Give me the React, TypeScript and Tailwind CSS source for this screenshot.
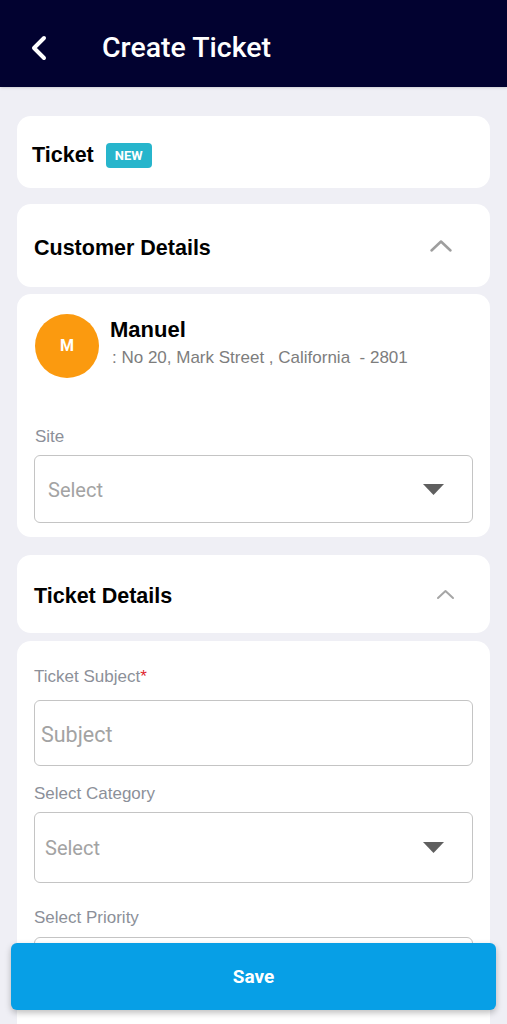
import React from "react";

const ChevronUp = ({ w, h, stroke, color }: { w: number; h: number; stroke: number; color: string }) => (
  <svg width={w} height={h} viewBox={`0 0 ${w} ${h}`} fill="none">
    <polyline
      points={`${stroke},${h - stroke} ${w / 2},${stroke} ${w - stroke},${h - stroke}`}
      stroke={color}
      strokeWidth={stroke}
      strokeLinecap="round"
      strokeLinejoin="round"
    />
  </svg>
);

const Caret = () => (
  <svg width="21" height="11" viewBox="0 0 21 11">
    <polygon points="0,0 21,0 10.5,11" fill="#5f5f5f" />
  </svg>
);

const SelectBox = ({ h, pl }: { h: string; pl: string }) => (
  <div className={`flex ${h} items-center justify-between rounded-[6px] border border-[#c4c4c4] ${pl} pr-[28px]`}>
    <span className="pt-[1px] font-['Roboto',sans-serif] text-[20px] text-[#a3a3a3]">Select</span>
    <Caret />
  </div>
);

const Label = ({ children, className = "" }: { children: React.ReactNode; className?: string }) => (
  <p className={`font-['Liberation_Sans',sans-serif] text-[17px] leading-[22px] text-[#8c9099] ${className}`}>
    {children}
  </p>
);

export default function App() {
  return (
    <div className="relative h-[1024px] overflow-hidden bg-[#efeff5]">
      {/* Header */}
      <header className="flex h-[87px] items-center bg-[#020230] pl-[30px] pt-[9px] shadow-sm">
        <svg width="18" height="26" viewBox="0 0 18 26" fill="none">
          <polyline points="14,3 4,13 14,23" stroke="white" strokeWidth="4" strokeLinecap="round" strokeLinejoin="round" />
        </svg>
        <h1 className="ml-[54px] font-['Roboto',sans-serif] text-[28.5px] font-medium text-white">Create Ticket</h1>
      </header>

      <main className="flex flex-col px-[17px] pt-[29px]">
        {/* Ticket */}
        <section className="flex h-[72px] items-center rounded-[14px] bg-white pl-[15px] pt-[6px]">
          <span className="font-['Liberation_Sans',sans-serif] text-[21.5px] font-bold text-black">Ticket</span>
          <span className="ml-[12px] rounded-[4px] bg-[#27b5cc] px-[9px] py-[4px] font-['Roboto',sans-serif] text-[13px] font-bold leading-[17px] text-white">
            NEW
          </span>
        </section>

        {/* Customer Details */}
        <section className="mt-[16px] flex h-[83px] items-center justify-between rounded-[14px] bg-white pl-[17px] pr-[37px]">
          <span className="pt-[5px] font-['Liberation_Sans',sans-serif] text-[21.5px] font-bold text-black">Customer Details</span>
          <ChevronUp w={24} h={14} stroke={2.5} color="#9e9e9e" />
        </section>

        <section className="mt-[7px] rounded-[14px] bg-white px-[17px] pb-[14px] pt-[20px]">
          <div className="flex items-start gap-[11px] pl-[1px]">
            <div className="flex h-[64px] w-[64px] items-center justify-center rounded-full bg-[#fb9a0f] font-['Roboto',sans-serif] text-[16px] font-bold text-white">
              M
            </div>
            <div className="pt-[4px]">
              <p className="font-['Liberation_Sans',sans-serif] text-[22px] font-bold leading-[24px] text-black">Manuel</p>
              <p className="mt-[5px] pl-[2px] font-['Liberation_Sans',sans-serif] text-[17px] leading-[22px] text-[#7d7d7d]">
                : No 20, Mark Street , California &nbsp;- 2801
              </p>
            </div>
          </div>
          <Label className="mt-[48px] pl-[1px]">Site</Label>
          <div className="mt-[7px]">
            <SelectBox h="h-[68px]" pl="pl-[13px]" />
          </div>
        </section>

        {/* Ticket Details */}
        <section className="mt-[18px] flex h-[78px] items-center justify-between rounded-[14px] bg-white pl-[17px] pr-[35px]">
          <span className="pt-[4px] font-['Liberation_Sans',sans-serif] text-[21.5px] font-bold text-black">Ticket Details</span>
          <ChevronUp w={19} h={11} stroke={2} color="#a6a6a6" />
        </section>

        <section className="mt-[8px] h-[420px] rounded-[14px] bg-white px-[17px] pt-[25px]">
          <Label>
            Ticket Subject<span className="text-[#e0262f]">*</span>
          </Label>
          <div className="mt-[12px] flex h-[66px] items-center rounded-[6px] border border-[#c4c4c4] pl-[6px] pt-[4px]">
            <span className="font-['Roboto',sans-serif] text-[21.5px] text-[#a3a3a3]">Subject</span>
          </div>
          <Label className="mt-[17px]">Select Category</Label>
          <div className="mt-[7px]">
            <SelectBox h="h-[71px]" pl="pl-[10px]" />
          </div>
          <Label className="mt-[24px]">Select Priority</Label>
          <div className="mt-[8px]">
            <SelectBox h="h-[70px]" pl="pl-[10px]" />
          </div>
        </section>
      </main>

      {/* Save */}
      <button className="absolute bottom-[14px] left-[11px] right-[11px] h-[67px] rounded-[6px] bg-[#079fe6] pt-[1px] font-['Roboto',sans-serif] text-[19px] font-bold text-white shadow-[0_3px_6px_rgba(0,0,0,0.25)]">
        Save
      </button>
    </div>
  );
}
